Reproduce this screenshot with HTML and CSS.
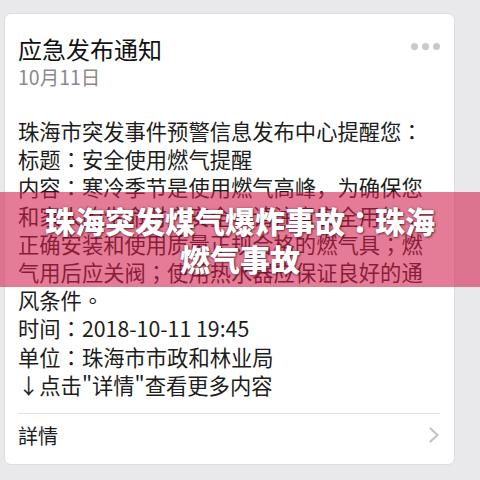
FILE: index.html
```html
<!DOCTYPE html>
<html lang="zh-CN">
<head>
<meta charset="utf-8">
<link rel="stylesheet" href="styles.css">
</head>
<body>
<div class="page">
  <div class="card">
    <div class="head">
      <div class="titles">
        <div class="title">应急发布通知</div>
        <div class="date">10月11日</div>
      </div>
      <div class="dots"><span></span><span></span><span></span></div>
    </div>
    <div class="body">
      <p>珠海市突发事件预警信息发布中心提醒您<span class="pc" lang="zh-TW">：</span></p>
      <p>标题<span class="pc" lang="zh-TW">：</span>安全使用燃气提醒</p>
      <p>内容<span class="pc" lang="zh-TW">：</span>寒冷季节是使用燃气高峰，为确保您和家人的生命财产安全，请注意安全用气<span class="pc" lang="zh-TW">：</span>正确安装和使用质量正规合格的燃气具<span class="pc" lang="zh-TW">；</span>燃气用后应关阀<span class="pc" lang="zh-TW">；</span>使用热水器应保证良好的通风条件<span class="pc" lang="zh-TW">。</span></p>
      <p>时间<span class="pc" lang="zh-TW">：</span>2018-10-11 19:45</p>
      <p>单位<span class="pc" lang="zh-TW">：</span>珠海市市政和林业局</p>
      <p>↓点击"详情"查看更多内容</p>
    </div>
    <div class="foot">
      <span class="more">詳情</span>
      <svg class="chev" width="12" height="16" viewBox="0 0 12 16"><path d="M2.5 1.5 L9.5 8 L2.5 14.5" fill="none" stroke="#c4c4c8" stroke-width="2.2" stroke-linecap="round" stroke-linejoin="round"/></svg>
    </div>
  </div>
  <div class="banner">珠海突发煤气爆炸事故<span class="pc" lang="zh-TW">：</span>珠海燃气事故</div>
</div>
</body>
</html>
```
FILE: styles.css
```css
html, body {
  margin: 0;
  padding: 0;
  background: #e9e9eb;
}
.page {
  position: relative;
  width: 480px;
  height: 480px;
  overflow: hidden;
  padding-top: 13px;
  box-sizing: border-box;
  font-family: "Noto Sans CJK SC", "Noto Sans", sans-serif;
}
.card {
  margin-left: 4px;
  width: 451px;
  height: 452px;
  box-sizing: border-box;
  background: #ffffff;
  border: 1px solid #dedee0;
  border-radius: 7px;
  display: flex;
  flex-direction: column;
  padding: 20px 12px 0 13px;
}
.head {
  display: flex;
  justify-content: space-between;
  align-items: flex-start;
}
.title {
  font-size: 24px;
  line-height: 30px;
  color: #111;
}
.date {
  font-size: 19.5px;
  line-height: 26px;
  color: #8a8a8e;
}
.dots {
  display: flex;
  gap: 4px;
  margin-top: 9px;
  margin-right: 2px;
}
.dots span {
  width: 7px;
  height: 7px;
  border-radius: 50%;
  background: #c8c8ca;
}
.body {
  margin-top: 27px;
  padding-bottom: 14px;
  border-bottom: 1px solid #e2e2e4;
  font-size: 21.3px;
  line-height: 28.2px;
  color: #1d1d20;
  margin-right: 2px;
}
.body p {
  margin: 0;
}
.pc {
  font-family: "Noto Sans CJK TC", "Noto Sans CJK SC", sans-serif;
}
.foot {
  display: flex;
  justify-content: space-between;
  align-items: center;
  height: 42px;
  margin-right: 2px;
}
.more {
  font-size: 20px;
  color: #1d1d20;
}
.banner {
  position: absolute;
  left: 0;
  top: 192px;
  width: 480px;
  height: 95px;
  box-sizing: border-box;
  padding: 9px 40px 0;
  background: rgba(210, 30, 75, 0.58);
  color: #ffffff;
  font-weight: 900;
  font-size: 30px;
  line-height: 38px;
  text-align: center;
  text-shadow: 1px 1px 2px rgba(60, 0, 20, 0.6), 0 0 3px rgba(60, 0, 20, 0.35);
}
```
